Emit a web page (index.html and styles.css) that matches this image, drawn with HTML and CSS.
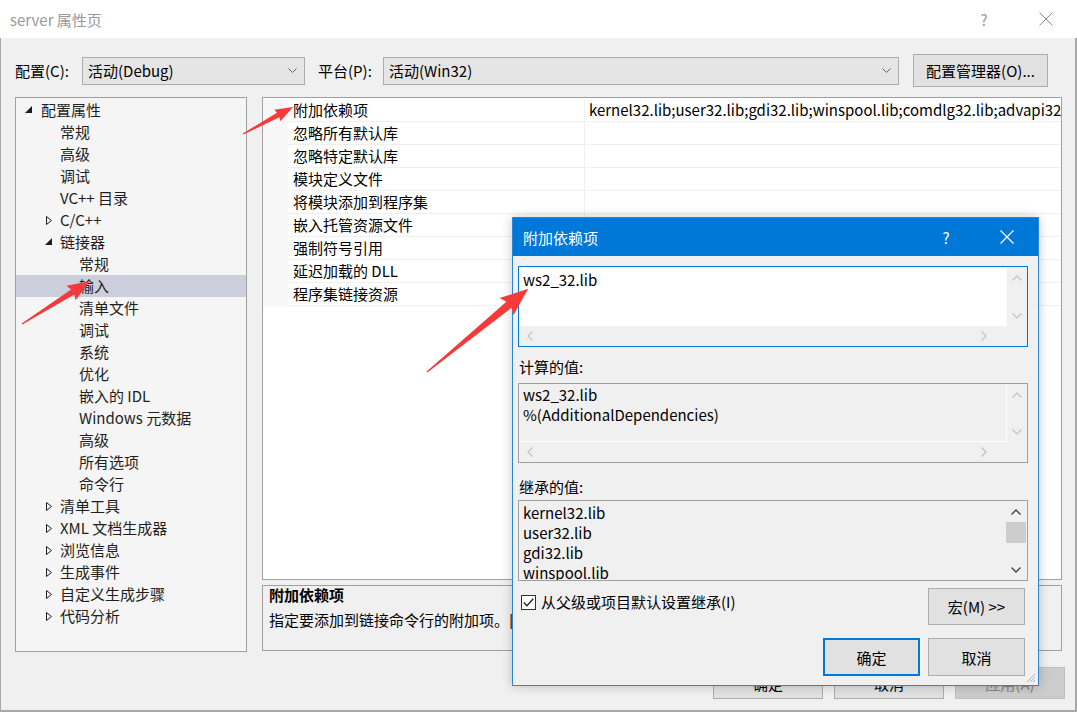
FILE: index.html
```html
<!DOCTYPE html>
<html lang="zh-CN">
<head>
  <meta charset="UTF-8">
  <title>server 属性页</title>
  <link rel="stylesheet" href="styles.css">
</head>
<body>
  <div class="window">
    <div class="titlebar">
      <span class="title">server 属性页</span>
      <span class="tb-help">?</span>
      <svg class="tb-close" width="14" height="14" viewBox="0 0 14 14"><path d="M0.5 0.5 L13.5 13.5 M13.5 0.5 L0.5 13.5" stroke="#8a8a8a" stroke-width="1" fill="none"/></svg>
    </div>

    <div class="config-row">
      <span class="cfg-label">配置(C):</span>
      <div class="combo combo-config">
        <span>活动(Debug)</span>
        <svg width="9" height="5" viewBox="0 0 9 5"><polyline points="0.5,0.5 4.5,4.5 8.5,0.5" fill="none" stroke="#606060"/></svg>
      </div>
      <span class="cfg-label plat">平台(P):</span>
      <div class="combo combo-platform">
        <span>活动(Win32)</span>
        <svg width="9" height="5" viewBox="0 0 9 5"><polyline points="0.5,0.5 4.5,4.5 8.5,0.5" fill="none" stroke="#606060"/></svg>
      </div>
      <button class="btn btn-manager">配置管理器(O)...</button>
    </div>

    <div class="main">
      <div class="tree">
        <div class="node l0"><span class="twisty"><svg width="8" height="8" viewBox="0 0 8 8"><polygon points="7,0 7,7 0,7" fill="#1e1e1e"/></svg></span>配置属性</div>
        <div class="node l1">常规</div>
        <div class="node l1">高级</div>
        <div class="node l1">调试</div>
        <div class="node l1">VC++ 目录</div>
        <div class="node l1"><span class="twisty"><svg width="8" height="9" viewBox="0 0 8 9"><polygon points="1.5,0.5 6.5,4.5 1.5,8.5" fill="none" stroke="#1e1e1e"/></svg></span>C/C++</div>
        <div class="node l1"><span class="twisty"><svg width="8" height="8" viewBox="0 0 8 8"><polygon points="7,0 7,7 0,7" fill="#1e1e1e"/></svg></span>链接器</div>
        <div class="node l2">常规</div>
        <div class="node l2 selected">输入</div>
        <div class="node l2">清单文件</div>
        <div class="node l2">调试</div>
        <div class="node l2">系统</div>
        <div class="node l2">优化</div>
        <div class="node l2">嵌入的 IDL</div>
        <div class="node l2">Windows 元数据</div>
        <div class="node l2">高级</div>
        <div class="node l2">所有选项</div>
        <div class="node l2">命令行</div>
        <div class="node l1"><span class="twisty"><svg width="8" height="9" viewBox="0 0 8 9"><polygon points="1.5,0.5 6.5,4.5 1.5,8.5" fill="none" stroke="#1e1e1e"/></svg></span>清单工具</div>
        <div class="node l1"><span class="twisty"><svg width="8" height="9" viewBox="0 0 8 9"><polygon points="1.5,0.5 6.5,4.5 1.5,8.5" fill="none" stroke="#1e1e1e"/></svg></span>XML 文档生成器</div>
        <div class="node l1"><span class="twisty"><svg width="8" height="9" viewBox="0 0 8 9"><polygon points="1.5,0.5 6.5,4.5 1.5,8.5" fill="none" stroke="#1e1e1e"/></svg></span>浏览信息</div>
        <div class="node l1"><span class="twisty"><svg width="8" height="9" viewBox="0 0 8 9"><polygon points="1.5,0.5 6.5,4.5 1.5,8.5" fill="none" stroke="#1e1e1e"/></svg></span>生成事件</div>
        <div class="node l1"><span class="twisty"><svg width="8" height="9" viewBox="0 0 8 9"><polygon points="1.5,0.5 6.5,4.5 1.5,8.5" fill="none" stroke="#1e1e1e"/></svg></span>自定义生成步骤</div>
        <div class="node l1"><span class="twisty"><svg width="8" height="9" viewBox="0 0 8 9"><polygon points="1.5,0.5 6.5,4.5 1.5,8.5" fill="none" stroke="#1e1e1e"/></svg></span>代码分析</div>
      </div>

      <div class="right">
        <div class="grid">
          <div class="row"><div class="gutter"></div><div class="name">附加依赖项</div><div class="value">kernel32.lib;user32.lib;gdi32.lib;winspool.lib;comdlg32.lib;advapi32.lib;shell32.lib;ole32.lib;oleaut32.lib;uuid.lib;odbc32.lib;odbccp32.lib;%(AdditionalDependencies)</div></div>
          <div class="row"><div class="gutter"></div><div class="name">忽略所有默认库</div><div class="value"></div></div>
          <div class="row"><div class="gutter"></div><div class="name">忽略特定默认库</div><div class="value"></div></div>
          <div class="row"><div class="gutter"></div><div class="name">模块定义文件</div><div class="value"></div></div>
          <div class="row"><div class="gutter"></div><div class="name">将模块添加到程序集</div><div class="value"></div></div>
          <div class="row"><div class="gutter"></div><div class="name">嵌入托管资源文件</div><div class="value"></div></div>
          <div class="row"><div class="gutter"></div><div class="name">强制符号引用</div><div class="value"></div></div>
          <div class="row"><div class="gutter"></div><div class="name">延迟加载的 DLL</div><div class="value"></div></div>
          <div class="row"><div class="gutter"></div><div class="name">程序集链接资源</div><div class="value"></div></div>
        </div>
        <div class="desc">
          <div class="desc-title">附加依赖项</div>
          <div class="desc-text">指定要添加到链接命令行的附加项。[例如 kernel32.lib]</div>
        </div>
      </div>
    </div>

    <div class="footer">
      <button class="btn btn-main">确定</button>
      <button class="btn btn-main">取消</button>
      <button class="btn btn-main disabled">应用(A)</button>
    </div>
  </div>

  <div class="dialog">
    <div class="dlg-title">
      <span class="dlg-name">附加依赖项</span>
      <span class="dlg-help">?</span>
      <svg class="dlg-close" width="14" height="14" viewBox="0 0 14 14"><path d="M0.5 0.5 L13.5 13.5 M13.5 0.5 L0.5 13.5" stroke="#ffffff" stroke-width="1.2" fill="none"/></svg>
    </div>
    <div class="dlg-body">
      <div class="editbox focus">
        <div class="eb-text">ws2_32.lib</div>
        <div class="vscroll">
          <svg width="10" height="6" viewBox="0 0 10 6"><polyline points="0.5,5.5 5,1 9.5,5.5" fill="none" stroke="#c2c2c2" stroke-width="1.2"/></svg>
          <svg width="10" height="6" viewBox="0 0 10 6"><polyline points="0.5,0.5 5,5 9.5,0.5" fill="none" stroke="#c2c2c2" stroke-width="1.2"/></svg>
        </div>
        <div class="hscroll">
          <svg width="6" height="10" viewBox="0 0 6 10"><polyline points="5.5,0.5 1,5 5.5,9.5" fill="none" stroke="#c2c2c2" stroke-width="1.2"/></svg>
          <svg width="6" height="10" viewBox="0 0 6 10"><polyline points="0.5,0.5 5,5 0.5,9.5" fill="none" stroke="#c2c2c2" stroke-width="1.2"/></svg>
        </div>
        <div class="corner"></div>
      </div>

      <div class="field-label">计算的值:</div>
      <div class="editbox readonly">
        <div class="eb-text">ws2_32.lib<br>%(AdditionalDependencies)</div>
        <div class="vscroll">
          <svg width="10" height="6" viewBox="0 0 10 6"><polyline points="0.5,5.5 5,1 9.5,5.5" fill="none" stroke="#c2c2c2" stroke-width="1.2"/></svg>
          <svg width="10" height="6" viewBox="0 0 10 6"><polyline points="0.5,0.5 5,5 9.5,0.5" fill="none" stroke="#c2c2c2" stroke-width="1.2"/></svg>
        </div>
        <div class="hscroll">
          <svg width="6" height="10" viewBox="0 0 6 10"><polyline points="5.5,0.5 1,5 5.5,9.5" fill="none" stroke="#c2c2c2" stroke-width="1.2"/></svg>
          <svg width="6" height="10" viewBox="0 0 6 10"><polyline points="0.5,0.5 5,5 0.5,9.5" fill="none" stroke="#c2c2c2" stroke-width="1.2"/></svg>
        </div>
        <div class="corner"></div>
      </div>

      <div class="field-label inherit">继承的值:</div>
      <div class="listbox">
        <div class="lb-items">
          <div>kernel32.lib</div>
          <div>user32.lib</div>
          <div>gdi32.lib</div>
          <div>winspool.lib</div>
        </div>
        <div class="lb-scroll">
          <div class="lb-arrow"><svg width="10" height="6" viewBox="0 0 10 6"><polyline points="0.5,5.5 5,1 9.5,5.5" fill="none" stroke="#404040" stroke-width="1.3"/></svg></div>
          <div class="lb-thumb"></div>
          <div class="lb-track"></div>
          <div class="lb-arrow"><svg width="10" height="6" viewBox="0 0 10 6"><polyline points="0.5,0.5 5,5 9.5,0.5" fill="none" stroke="#404040" stroke-width="1.3"/></svg></div>
        </div>
      </div>

      <div class="check-row">
        <label class="check">
          <span class="box"><svg width="11" height="9" viewBox="0 0 11 9"><polyline points="0.8,4.5 4,7.8 10.2,0.8" fill="none" stroke="#222" stroke-width="1.3"/></svg></span>
          从父级或项目默认设置继承(I)
        </label>
        <button class="btn btn-dlg btn-macro">宏(M) &gt;&gt;</button>
      </div>

      <div class="dlg-buttons">
        <button class="btn btn-dlg default">确定</button>
        <button class="btn btn-dlg">取消</button>
      </div>
    </div>
    <svg class="grip" width="10" height="10" viewBox="0 0 10 10"><path d="M9 1 L1 9 M9 4 L4 9 M9 7 L7 9" stroke="#b0b0b0" stroke-width="1" fill="none"/></svg>
  </div>

  <svg class="arrows" width="1077" height="712" viewBox="0 0 1077 712">
    <polygon transform="translate(243,134) rotate(-28.4)" points="0,-0.6 40,-2.5 39,-6.5 57,0 39,6.5 40,2.5 0,0.6" fill="#f43a3a"/>
    <polygon transform="translate(22,324) rotate(-32.3)" points="0,-0.6 60,-3 58,-8.5 80,0 58,8.5 60,3 0,0.6" fill="#f43a3a"/>
    <polygon transform="translate(427,372) rotate(-39.4)" points="0,-0.6 106,-4 103,-11 131,0 103,11 106,4 0,0.6" fill="#f43a3a"/>
  </svg>
</body>
</html>
```

FILE: styles.css
```css
* { box-sizing: border-box; }

body {
  margin: 0;
  width: 1077px;
  height: 712px;
  overflow: hidden;
  position: relative;
  background: #f0f0f0;
  font-family: "Noto Sans CJK SC", "Noto Sans", sans-serif;
  font-size: 15px;
  color: #000;
}

.window {
  height: 712px;
  background: #f0f0f0;
  box-shadow: inset 1px 0 #a8a8a8, inset -2px 0 #a8a8a8, inset 0 -2px #a8a8a8;
}

/* title bar */
.titlebar {
  height: 38px;
  background: #fff;
  display: flex;
  align-items: center;
  padding-left: 10px;
}

.titlebar .title {
  flex: 1;
  color: #999;
}

.tb-help {
  color: #999;
  width: 10px;
  text-align: center;
  margin-right: 50px;
}

.tb-close {
  margin-right: 24px;
}

/* configuration row */
.config-row {
  display: flex;
  align-items: center;
  height: 33px;
  margin-top: 16px;
  padding-left: 15px;
}

.cfg-label {
  width: 67px;
}

.cfg-label.plat {
  width: 65px;
  margin-left: 13px;
}

.combo {
  height: 28px;
  background: #e5e5e5;
  border: 1px solid #adadad;
  display: flex;
  align-items: center;
  justify-content: space-between;
  padding: 0 7px 0 5px;
}

.combo-config { width: 223px; }
.combo-platform { width: 516px; }

.btn {
  font-family: inherit;
  font-size: 15px;
  color: #000;
  background: #e1e1e1;
  border: 1px solid #adadad;
  padding: 0;
  cursor: pointer;
}

.btn-manager {
  width: 135px;
  height: 33px;
  margin-left: 14px;
}

/* tree + property grid */
.main {
  display: flex;
  margin-top: 10px;
  padding-left: 15px;
}

.tree {
  width: 232px;
  height: 555px;
  background: #f5f5f5;
  border: 1px solid #a0a0a0;
  padding-top: 1px;
}

.node {
  height: 22px;
  line-height: 22px;
  display: flex;
  align-items: center;
  white-space: nowrap;
  color: #1e1e1e;
}

.node.l0 { padding-left: 25px; }
.node.l1 { padding-left: 44px; }
.node.l2 { padding-left: 63px; }

.node.selected {
  background: #cccedb;
}

.twisty {
  width: 16px;
  margin-left: -16px;
  display: flex;
  align-items: center;
}

.node.l1 .twisty { padding-left: 1px; }

.right {
  margin-left: 15px;
  width: 800px;
}

.grid {
  height: 483px;
  background: #fff;
  border: 1px solid #a0a0a0;
  padding-top: 1px;
  overflow: hidden;
}

.row {
  display: flex;
  height: 23px;
  line-height: 22px;
}

.gutter {
  width: 25px;
  background: #f7f7f7;
}

.name {
  width: 297px;
  padding-left: 5px;
  border-right: 1px solid #f0f0f0;
  border-bottom: 1px solid #f0f0f0;
  white-space: nowrap;
}

.value {
  flex: 1;
  padding-left: 4px;
  border-bottom: 1px solid #f0f0f0;
  white-space: nowrap;
  overflow: hidden;
}

.desc {
  margin-top: 5px;
  height: 66px;
  border: 1px solid #a0a0a0;
  padding: 0 6px;
  line-height: 18px;
}

.desc-title {
  font-weight: bold;
}

.desc-text {
  margin-top: 7px;
  white-space: nowrap;
}

.footer {
  display: flex;
  justify-content: flex-end;
  gap: 11px;
  margin-top: 15px;
  padding-right: 12px;
}

.btn-main {
  width: 110px;
  height: 32px;
}

.btn-main.disabled {
  background: #cccccc;
  border-color: #bfbfbf;
  color: #838383;
}

/* modal dialog */
.dialog {
  position: absolute;
  left: 512px;
  top: 217px;
  width: 527px;
  height: 469px;
  background: #f0f0f0;
  border: 1px solid #2b86d4;
  box-shadow: 0 0 10px rgba(0, 0, 0, 0.22);
}

.dlg-title {
  height: 38px;
  background: #0078d7;
  color: #fff;
  display: flex;
  align-items: center;
  padding-left: 10px;
}

.dlg-name { flex: 1; }

.dlg-help {
  width: 10px;
  text-align: center;
  margin-right: 49px;
}

.dlg-close { margin-right: 24px; }

.dlg-body {
  padding: 10px 10px 0 5px;
}

.editbox {
  display: grid;
  grid-template-columns: 1fr 20px;
  grid-template-rows: 1fr 20px;
  height: 81px;
  border: 1px solid #a0a0a0;
  background: #f0f0f0;
}

.editbox.focus {
  border-color: #0078d7;
}

.editbox.focus .eb-text {
  background: #fff;
  padding-top: 3px;
}

.editbox.readonly {
  height: 80px;
}

.editbox.readonly .eb-text {
  border-right: 1px solid #fff;
  border-bottom: 1px solid #fff;
}

.eb-text {
  padding: 1px 4px;
  line-height: 20px;
  white-space: nowrap;
  overflow: hidden;
}

.vscroll {
  display: flex;
  flex-direction: column;
  justify-content: space-between;
  align-items: center;
  padding: 8px 0 7px;
}

.hscroll {
  display: flex;
  justify-content: space-between;
  align-items: center;
  padding: 0 20px 0 8px;
}

.field-label {
  margin-top: 10px;
  height: 20px;
  line-height: 20px;
  padding-left: 1px;
}

.field-label + .editbox { margin-top: 6px; }

.field-label.inherit { margin-top: 14px; }

.listbox {
  margin-top: 3px;
  height: 81px;
  border: 1px solid #a0a0a0;
  display: flex;
  overflow: hidden;
}

.lb-items {
  flex: 1;
  padding: 2px 4px 0;
  line-height: 20px;
}

.lb-scroll {
  width: 21px;
  display: flex;
  flex-direction: column;
  padding-right: 1px;
}

.lb-arrow {
  height: 21px;
  display: flex;
  align-items: center;
  justify-content: center;
}

.lb-thumb {
  height: 21px;
  background: #cdcdcd;
}

.lb-track { flex: 1; }

.check-row {
  display: flex;
  justify-content: space-between;
  align-items: flex-start;
  margin-top: 7px;
  padding-right: 3px;
}

.check {
  display: flex;
  align-items: center;
  gap: 5px;
  margin: 5px 0 0 3px;
  line-height: 18px;
}

.check .box {
  width: 15px;
  height: 15px;
  border: 1px solid #333;
  background: #fff;
  display: flex;
  align-items: center;
  justify-content: center;
}

.btn-dlg {
  width: 97px;
  height: 38px;
}

.btn-macro { height: 37px; }

.dlg-buttons {
  display: flex;
  justify-content: flex-end;
  gap: 8px;
  margin-top: 13px;
  padding-right: 3px;
}

.btn-dlg.default {
  border: 2px solid #0078d7;
}

.grip {
  position: absolute;
  right: 2px;
  bottom: 2px;
}

/* annotation arrows */
.arrows {
  position: absolute;
  left: 0;
  top: 0;
  pointer-events: none;
}
```
